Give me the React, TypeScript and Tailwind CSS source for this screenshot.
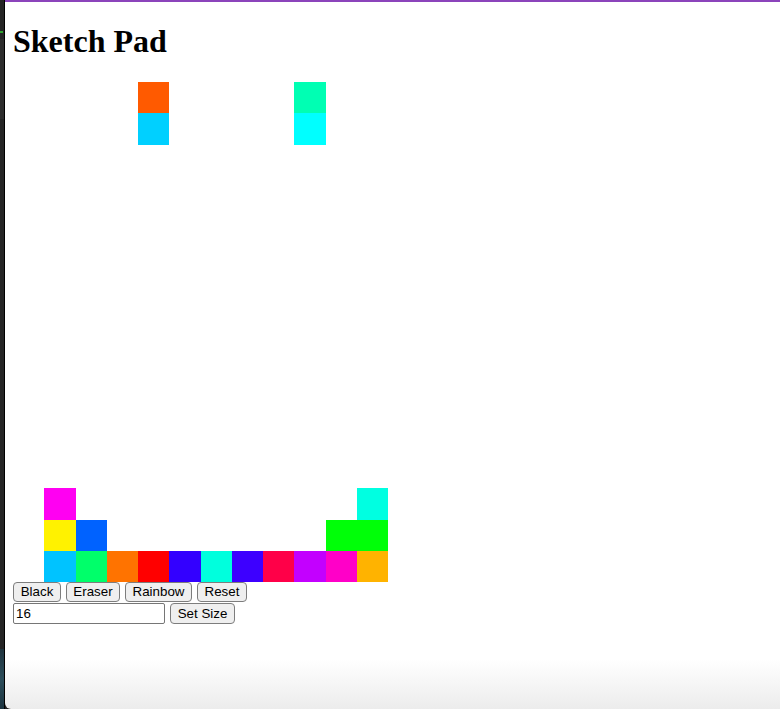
const paint: Record<string, string> = {
  "0-4": "bg-[#ff5a00]",
  "0-9": "bg-[#00ffb3]",
  "1-4": "bg-[#00d0ff]",
  "1-9": "bg-[#00ffff]",
  "13-1": "bg-[#ff00f2]",
  "13-11": "bg-[#00ffe1]",
  "14-1": "bg-[#fff200]",
  "14-2": "bg-[#0062ff]",
  "14-10": "bg-[#00ff08]",
  "14-11": "bg-[#00ff08]",
  "15-1": "bg-[#00c3ff]",
  "15-2": "bg-[#00ff6a]",
  "15-3": "bg-[#ff7300]",
  "15-4": "bg-[#ff0000]",
  "15-5": "bg-[#3300ff]",
  "15-6": "bg-[#00ffdd]",
  "15-7": "bg-[#3d00ff]",
  "15-8": "bg-[#ff0048]",
  "15-9": "bg-[#c300ff]",
  "15-10": "bg-[#ff00c8]",
  "15-11": "bg-[#ffb300]",
};

const size = 16;

const Btn = ({ label, w }: { label: string; w: string }) => (
  <button
    type="button"
    className={`${w} h-[20px] rounded-[4px] border border-[#7d7d7d] bg-[#efefef] text-center text-[13.333px] leading-[18px] text-black`}
  >
    {label}
  </button>
);

const App = () => {
  const cells = [];
  for (let r = 0; r < size; r++) {
    for (let c = 0; c < size; c++) {
      cells.push(<div key={`${r}-${c}`} className={paint[`${r}-${c}`] ?? "bg-white"} />);
    }
  }

  return (
    <div className="flex h-[709px] w-[780px] overflow-hidden bg-[#232323] font-['Liberation_Sans',Arial,sans-serif]">
      {/* window behind */}
      <div className="flex w-[5px] flex-col border-r border-black bg-[#252525]">
        <div className="mt-[31px] h-[2px] w-[3px] bg-[#2fa52f]" />
        <div className="mt-[6px] h-[80px] w-[4px] bg-[#2d2d2d]" />
        <div className="flex-1" />
        <div className="h-[60px] w-[4px] bg-[linear-gradient(to_bottom,#20353f,#2c4d5a,#1c3440)]" />
      </div>

      {/* page */}
      <div className="flex-1 overflow-hidden rounded-bl-[6px] border-t-2 border-[#8b44bb] bg-[linear-gradient(to_bottom,#ffffff_0%,#ffffff_93%,#ececec_100%)] px-[8px]">
        <h1 className="mt-[21px] mb-[22px] font-['Liberation_Serif','Times_New_Roman',serif] text-[32px] leading-[37px] font-bold text-black">
          Sketch Pad
        </h1>

        <div className="grid h-[500px] w-[500px] grid-cols-[repeat(16,31.25px)] grid-rows-[repeat(16,31.25px)]">
          {cells}
        </div>

        <div className="flex gap-[5px]">
          <Btn label="Black" w="w-[48px]" />
          <Btn label="Eraser" w="w-[54px]" />
          <Btn label="Rainbow" w="w-[67px]" />
          <Btn label="Reset" w="w-[50px]" />
        </div>

        <div className="mt-[1px] flex gap-[5px]">
          <input
            readOnly
            value="16"
            className="h-[21px] w-[152px] rounded-[2px] border border-[#767676] bg-white px-[2px] text-[13.333px] text-black outline-none"
          />
          <Btn label="Set Size" w="w-[65px] h-[21px]" />
        </div>
      </div>
    </div>
  );
};

export default App;
